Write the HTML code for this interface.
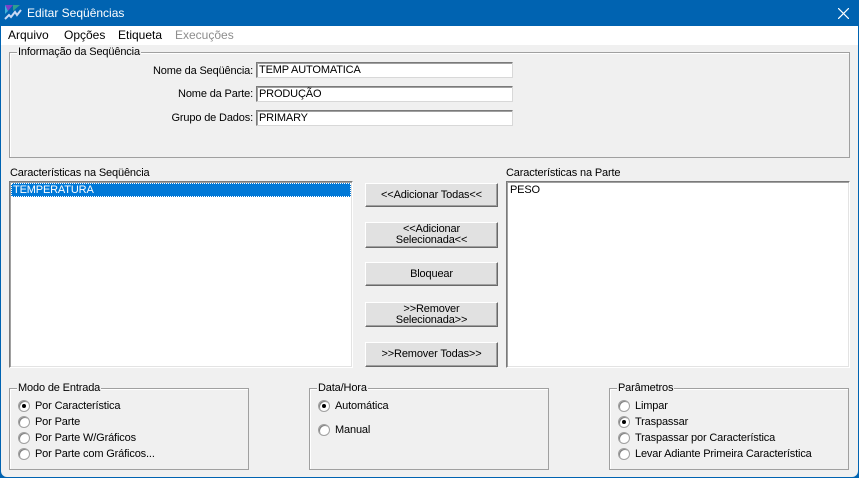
<!DOCTYPE html>
<html><head><meta charset="utf-8"><style>
*{box-sizing:border-box;margin:0;padding:0}
body{width:859px;height:478px;overflow:hidden;background:#0063b1;font-family:"Liberation Sans",sans-serif;font-size:11px;color:#000;position:relative;letter-spacing:-0.15px}
.a{position:absolute}
#title{left:0;top:0;width:859px;height:26px;background:#0063b1;color:#fff;font-size:12px;letter-spacing:0}
#client{left:1px;top:26px;width:857px;height:451px;background:#f0f0f0;border-radius:0 0 6px 6px}
#menu{left:1px;top:26px;width:857px;height:19px;background:#fff;font-size:12px;letter-spacing:0}
.grp{position:absolute;border:1px solid #a0a0a0;box-shadow:1px 1px 0 #fff inset}
.lg{position:absolute;top:-7px;left:7px;background:#f0f0f0;padding:0 1px;line-height:12px}
.inp{position:absolute;left:256px;width:257px;height:16px;background:#fff;border:1px solid #7a7a7a;border-right-color:#d8d8d8;border-bottom-color:#d8d8d8;box-shadow:1px 1px 0 #a0a0a0 inset;padding:1px 2px;line-height:13px}
.lbl{position:absolute;right:606px;text-align:right;white-space:nowrap}
.list{position:absolute;background:#fff;border:1px solid #7a7a7a;border-right-color:#fff;border-bottom-color:#fff;box-shadow:1px 1px 0 #a0a0a0 inset,-1px -1px 0 #e3e3e3 inset}
.btn{position:absolute;left:365px;width:133px;background:#e1e1e1;border:1px solid #fff;border-right-color:#696969;border-bottom-color:#696969;box-shadow:-1px -1px 0 #a0a0a0 inset;text-align:center;line-height:11px;display:flex;align-items:center;justify-content:center}
.r{position:absolute;white-space:nowrap;line-height:13px}
.r i{position:absolute;left:-17px;top:0;width:12px;height:12px;border-radius:50%;background:#fff;border:1px solid #a0a0a0;box-shadow:1px 1px 0 #808080 inset}
.r i.on::after{content:"";position:absolute;left:3px;top:3px;width:4px;height:4px;border-radius:50%;background:#000}
</style></head><body>
<div id="title" class="a">
<svg class="a" style="left:4px;top:4px" width="18" height="18" viewBox="0 0 18 18"><polygon points="1,1 9,1 4,7" fill="#7b3fc6"/><polygon points="9,1 16,1 9,7" fill="#2f9e8f"/><polygon points="1,1 4,7 1,10" fill="#3bb0d8"/><path d="M1 15 L5 11 L7 13 L11 8 L13 11 L17 6" stroke="#c9d9f4" stroke-width="2" fill="none"/></svg>
<div class="a" style="left:27px;top:6px">Editar Seqüências</div>
<svg class="a" style="left:838px;top:8px" width="11" height="11"><path d="M0 0L11 11M11 0L0 11" stroke="#fff" stroke-width="1.2"/></svg>
</div>
<div id="client" class="a"></div>
<div id="menu" class="a">
<span class="a" style="left:7px;top:2px">Arquivo</span>
<span class="a" style="left:63px;top:2px">Opções</span>
<span class="a" style="left:117px;top:2px">Etiqueta</span>
<span class="a" style="left:174px;top:2px;color:#8d8d8d">Execuções</span>
</div>

<div class="grp" style="left:9px;top:52px;width:841px;height:106px"><div class="lg">Informação da Seqüência</div></div>
<div class="lbl" style="top:65px">Nome da Seqüência:</div>
<div class="lbl" style="top:88px">Nome da Parte:</div>
<div class="lbl" style="top:112px">Grupo de Dados:</div>
<div class="inp" style="top:62px">TEMP AUTOMATICA</div>
<div class="inp" style="top:86px">PRODUÇÃO</div>
<div class="inp" style="top:110px">PRIMARY</div>

<div class="a" style="left:10px;top:167px">Características na Seqüência</div>
<div class="list" style="left:9px;top:181px;width:344px;height:187px"><div class="a" style="left:1px;top:1px;width:340px;height:14px;background:#0078d7;color:#fff;padding-left:2px;line-height:14px;outline:1px dotted #fff;outline-offset:-1px">TEMPERATURA</div></div>
<div class="a" style="left:506px;top:167px">Características na Parte</div>
<div class="list" style="left:506px;top:181px;width:344px;height:187px"><div class="a" style="left:3px;top:2px">PESO</div></div>

<div class="btn" style="top:183px;height:24px">&lt;&lt;Adicionar Todas&lt;&lt;</div>
<div class="btn" style="top:222px;height:26px">&lt;&lt;Adicionar<br>Selecionada&lt;&lt;</div>
<div class="btn" style="top:262px;height:24px">Bloquear</div>
<div class="btn" style="top:302px;height:25px">&gt;&gt;Remover<br>Selecionada&gt;&gt;</div>
<div class="btn" style="top:342px;height:25px">&gt;&gt;Remover Todas&gt;&gt;</div>

<div class="grp" style="left:9px;top:388px;width:240px;height:82px"><div class="lg">Modo de Entrada</div></div>
<div class="r" style="left:35px;top:400px"><i class="on"></i>Por Característica</div>
<div class="r" style="left:35px;top:416px"><i></i>Por Parte</div>
<div class="r" style="left:35px;top:432px"><i></i>Por Parte W/Gráficos</div>
<div class="r" style="left:35px;top:448px"><i></i>Por Parte com Gráficos...</div>

<div class="grp" style="left:309px;top:388px;width:240px;height:82px"><div class="lg">Data/Hora</div></div>
<div class="r" style="left:335px;top:400px"><i class="on"></i>Automática</div>
<div class="r" style="left:335px;top:424px"><i></i>Manual</div>

<div class="grp" style="left:609px;top:388px;width:240px;height:82px"><div class="lg">Parâmetros</div></div>
<div class="r" style="left:635px;top:400px"><i></i>Limpar</div>
<div class="r" style="left:635px;top:416px"><i class="on"></i>Traspassar</div>
<div class="r" style="left:635px;top:432px"><i></i>Traspassar por Característica</div>
<div class="r" style="left:635px;top:448px"><i></i>Levar Adiante Primeira Característica</div>
</body></html>
